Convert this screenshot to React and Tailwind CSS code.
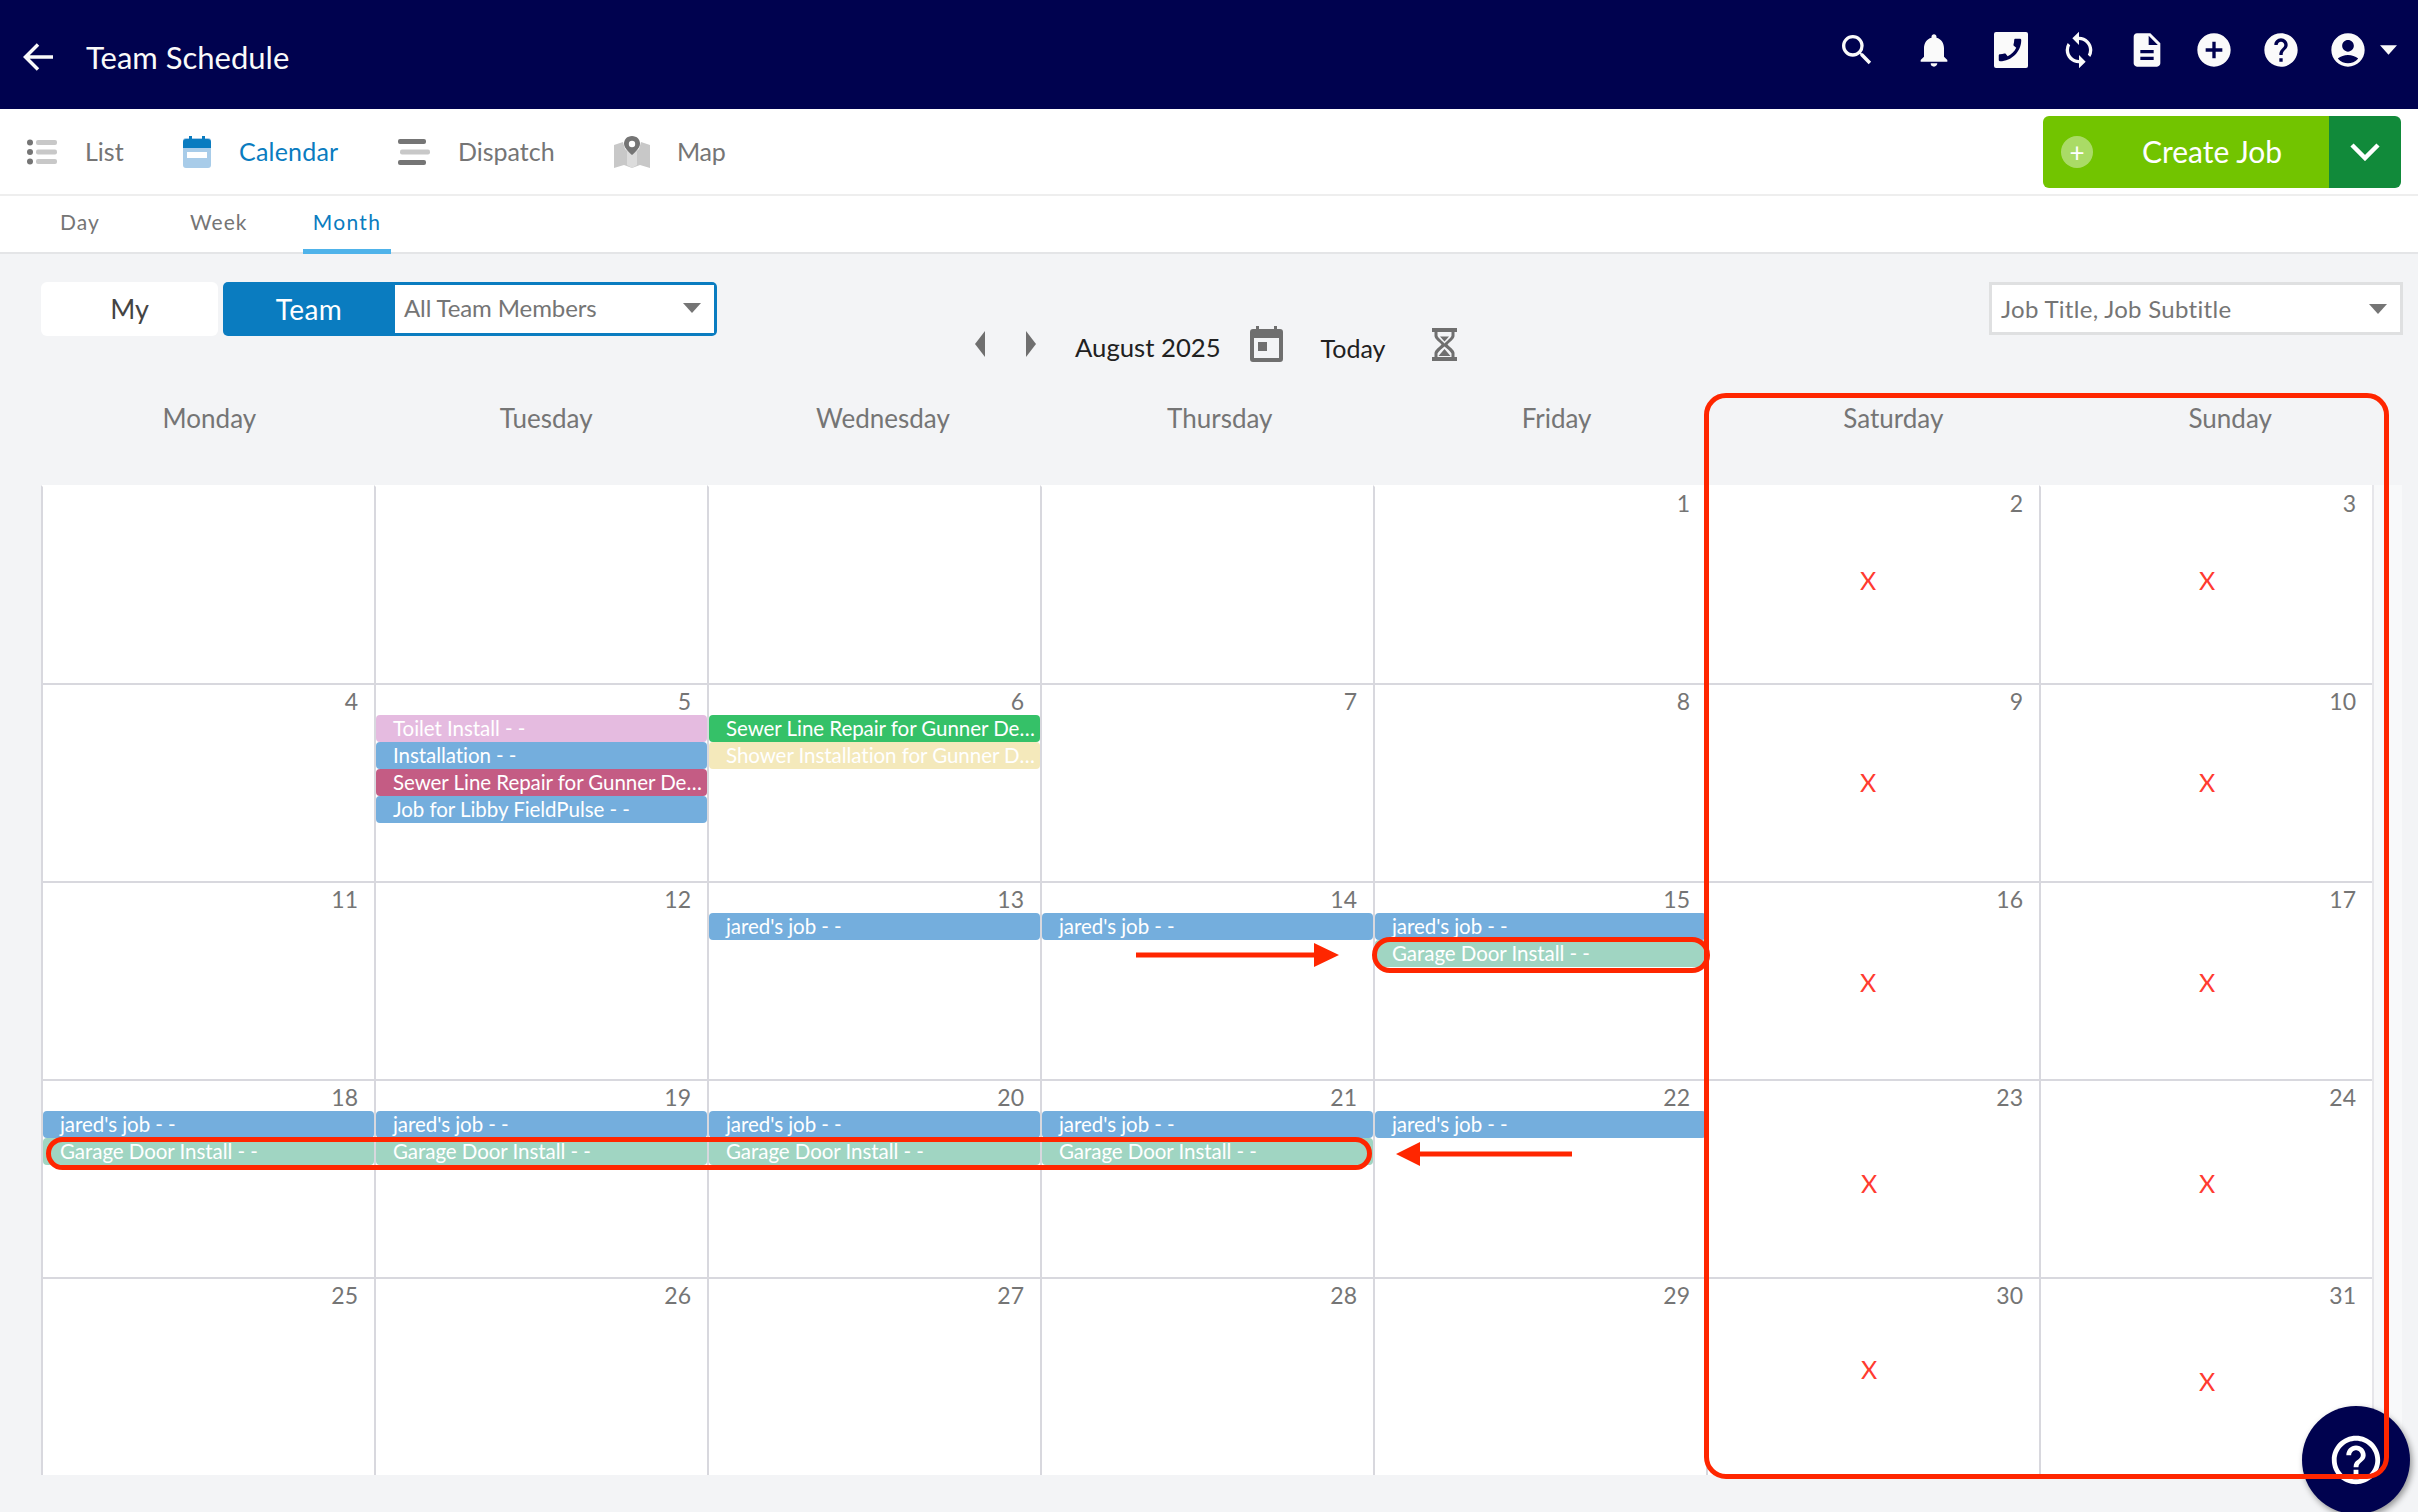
import * as React from 'react';
import { MdAccountCircle, MdAddCircle, MdDescription, MdHelp, MdHelpOutline, MdNotifications, MdSearch, MdSync } from 'react-icons/md';

const weekdays = ['Monday', 'Tuesday', 'Wednesday', 'Thursday', 'Friday', 'Saturday', 'Sunday'];

const blue = 'bg-[#74aedd]';
const teal = 'bg-[#a0d5c2]';

const events = {
  5: [
    { title: 'Toilet Install - -', color: 'bg-[#e5bbe0]' },
    { title: 'Installation - -', color: blue },
    { title: 'Sewer Line Repair for Gunner Dean - -', color: 'bg-[#c45c84]' },
    { title: 'Job for Libby FieldPulse - -', color: blue },
  ],
  6: [
    { title: 'Sewer Line Repair for Gunner Dean - -', color: 'bg-[#35c168]' },
    { title: 'Shower Installation for Gunner Dean - -', color: 'bg-[#f4e9bb]' },
  ],
  13: [{ title: "jared's job - -", color: blue }],
  14: [{ title: "jared's job - -", color: blue }],
  15: [{ title: "jared's job - -", color: blue }, { title: 'Garage Door Install - -', color: teal }],
  18: [{ title: "jared's job - -", color: blue }, { title: 'Garage Door Install - -', color: teal }],
  19: [{ title: "jared's job - -", color: blue }, { title: 'Garage Door Install - -', color: teal }],
  20: [{ title: "jared's job - -", color: blue }, { title: 'Garage Door Install - -', color: teal }],
  21: [{ title: "jared's job - -", color: blue }, { title: 'Garage Door Install - -', color: teal }],
  22: [{ title: "jared's job - -", color: blue }],
};

// august 2025 starts on a friday, four blank cells first
const cells = [null, null, null, null, ...Array.from({ length: 31 }, (_, i) => i + 1)];

const marks = [
  'left-[1860px] top-[565px]',
  'left-[2199px] top-[565px]',
  'left-[1860px] top-[767px]',
  'left-[2199px] top-[767px]',
  'left-[1860px] top-[967px]',
  'left-[2199px] top-[967px]',
  'left-[1861px] top-[1168px]',
  'left-[2199px] top-[1168px]',
  'left-[1861px] top-[1354px]',
  'left-[2199px] top-[1366px]',
];

function Caret({ className }) {
  return (
    <svg viewBox="0 0 18 10" className={className}>
      <path d="M0 0h18L9 10z" fill="currentColor" />
    </svg>
  );
}

function PhoneCard() {
  return (
    <svg viewBox="0 0 34 36" className="h-[36px] w-[34px]">
      <rect width="34" height="36" rx="2" fill="#fafafa" />
      <g transform="translate(31 3) scale(-1.25 1.25)">
        <path
          fill="#00024f"
          d="M20.01 15.38c-1.23 0-2.42-.2-3.53-.56-.35-.12-.74-.03-1.01.24l-1.57 1.97c-2.83-1.35-5.48-3.9-6.89-6.83l1.95-1.66c.27-.28.35-.67.24-1.02-.37-1.11-.56-2.3-.56-3.53 0-.54-.45-.99-.99-.99H4.19C3.65 3 3 3.24 3 3.99 3 13.28 10.73 21 20.01 21c.71 0 .99-.63.99-1.18v-3.45c0-.54-.45-.99-.99-.99z"
        />
      </g>
    </svg>
  );
}

function TopBar() {
  return (
    <header className="flex h-[109px] items-center bg-[#00024f] text-[#fafafa]">
      <svg viewBox="0 0 30 28" className="ml-[23px] mt-[5px] h-[28px] w-[30px]" fill="none" stroke="currentColor" strokeWidth="3.500">
        <path d="M30 14H3M15 1.500L2.500 14 15 26.500" />
      </svg>
      <span className="ml-[33px] mt-[5px] text-[31px] leading-none">Team Schedule</span>
      <div className="mb-[10px] ml-auto mr-[21px] flex items-center">
        <MdSearch className="h-[40px] w-[40px]" />
        <MdNotifications className="ml-[37px] h-[40px] w-[40px]" />
        <div className="ml-[37px] flex w-[40px] justify-center">
          <PhoneCard />
        </div>
        <MdSync className="ml-[28px] h-[42px] w-[40px]" />
        <MdDescription className="ml-[28px] h-[44px] w-[40px]" />
        <MdAddCircle className="ml-[27px] h-[44px] w-[40px]" />
        <MdHelp className="ml-[27px] h-[44px] w-[40px]" />
        <MdAccountCircle className="ml-[27px] h-[44px] w-[40px]" />
        <Caret className="ml-[12px] h-[10px] w-[17px]" />
      </div>
    </header>
  );
}

function ListIcon() {
  return (
    <svg viewBox="0 0 30 26" className="h-[26px] w-[30px]">
      <circle cx="3" cy="3.5" r="3" fill="#757575" />
      <circle cx="3" cy="13" r="3" fill="#757575" />
      <circle cx="3" cy="22.5" r="3" fill="#757575" />
      <rect x="9" y="1" width="21" height="5" rx="2" fill="#c8c8c8" />
      <rect x="9" y="10.5" width="21" height="5" rx="2" fill="#c8c8c8" />
      <rect x="9" y="20" width="21" height="5" rx="2" fill="#c8c8c8" />
    </svg>
  );
}

function CalendarIcon() {
  return (
    <svg viewBox="0 0 28 32" className="h-[32px] w-[28px]">
      <rect y="2" width="28" height="30" rx="3" fill="#a8cce9" />
      <path d="M3 3h3V0h3v3h10V0h3v3h3a3 3 0 0 1 3 3v6H0V6a3 3 0 0 1 3-3z" fill="#0a7cc0" />
      <rect x="4" y="16" width="20" height="6" fill="#fff" />
    </svg>
  );
}

function DispatchIcon() {
  return (
    <svg viewBox="0 0 32 26" className="h-[26px] w-[32px]">
      <rect width="28" height="5" rx="2" fill="#757575" />
      <rect x="2" y="10.5" width="30" height="5" rx="2" fill="#c8c8c8" />
      <rect y="21" width="28" height="5" rx="2" fill="#757575" />
    </svg>
  );
}

function MapIcon() {
  return (
    <svg viewBox="0 0 36 32" className="h-[32px] w-[36px]">
      <path d="M0 9l9-3 2 7 7 6 7-6 2-7 9 3v23l-10-3-8 3-8-3-10 3z" fill="#c8c8c8" />
      <path d="M13 14l5 5 5-5v15l-5 3-5-3z" fill="#dcdcdc" />
      <path d="M18 0c-5 0-8 3.600-8 7.800C10 13 18 19 18 19s8-6 8-11.200C26 3.600 23 0 18 0z" fill="#757575" />
      <circle cx="18" cy="8" r="3.200" fill="#fff" />
    </svg>
  );
}

function NavBar() {
  const itemClass = 'flex items-center text-[25px] leading-none';
  return (
    <nav className="flex h-[87px] items-center border-b-2 border-[#eeeeee] bg-white pr-[17px] text-[#757575]">
      <div className={`${itemClass} ml-[27px] w-[156px]`}>
        <ListIcon />
        <span className="ml-[28px]">List</span>
      </div>
      <div className={`${itemClass} w-[215px] text-[#0a7cc0]`}>
        <CalendarIcon />
        <span className="ml-[28px] tracking-[0.2px]">Calendar</span>
      </div>
      <div className={`${itemClass} w-[216px]`}>
        <DispatchIcon />
        <span className="ml-[28px]">Dispatch</span>
      </div>
      <div className={itemClass}>
        <MapIcon />
        <span className="ml-[27px] tracking-[-0.3px]">Map</span>
      </div>
      <button className="ml-auto flex h-[72px] w-[358px] overflow-hidden rounded-[6px] text-white">
        <span className="flex w-[286px] items-center bg-[#72c400] pl-[18px]">
          <span className="flex h-[32px] w-[32px] items-center justify-center rounded-full bg-white/40 text-[26px] leading-none">+</span>
          <span className="mb-[2px] ml-[49px] text-[30px] leading-none">Create Job</span>
        </span>
        <span className="flex flex-1 items-center justify-center bg-[#118a3a]">
          <svg viewBox="0 0 30 18" className="h-[18px] w-[30px]" fill="none" stroke="white" strokeWidth="4.500">
            <path d="M2 2l13 13L28 2" />
          </svg>
        </span>
      </button>
    </nav>
  );
}

function Tabs() {
  return (
    <div className="flex h-[58px] border-b-2 border-[#e4e5e7] bg-white text-[21px] tracking-[1px] text-[#757575]">
      <span className="ml-[60px] mt-[12px] w-[130px] leading-[28px]">Day</span>
      <span className="mt-[12px] w-[113px] leading-[28px]">Week</span>
      <span className="relative w-[88px] pt-[12px] text-center leading-[28px] tracking-[1.300px] text-[#0a7cc0]">
        Month
        <span className="absolute bottom-[-2px] left-0 h-[5px] w-full bg-[#4fb3ea]" />
      </span>
    </div>
  );
}

function Toolbar() {
  return (
    <div className="flex h-[126px] items-start pl-[41px] pr-[15px]">
      <button className="mt-[28px] flex h-[54px] w-[177px] items-center justify-center rounded-[6px] bg-white text-[27px] text-[#444444]">My</button>
      <div className="ml-[5px] mt-[28px] flex h-[54px] w-[494px] rounded-[5px] bg-[#0a7cc0] p-[3px] pl-0">
        <span className="flex w-[172px] items-center justify-center text-[28px] tracking-[0.4px] text-white">Team</span>
        <div className="flex flex-1 items-center justify-between bg-white pl-[9px] pr-[13px] text-[24px] tracking-[-0.1px] text-[#757575]">
          <span className="mb-[2px]">All Team Members</span>
          <Caret className="mb-[2px] h-[10px] w-[18px]" />
        </div>
      </div>
      <div className="ml-[258px] mt-[72px] flex h-[36px] items-center text-[#212121]">
        <svg viewBox="0 0 10 26" className="h-[26px] w-[10px] text-[#6f6f6f]">
          <path d="M10 0v26L0 13z" fill="currentColor" />
        </svg>
        <svg viewBox="0 0 10 26" className="ml-[41px] h-[26px] w-[10px] text-[#6f6f6f]">
          <path d="M0 0v26l10-13z" fill="currentColor" />
        </svg>
        <span className="ml-[39px] mt-[8px] text-[25.700px] leading-none">August 2025</span>
        <svg viewBox="0 0 33 36" className="ml-[29px] h-[36px] w-[33px]">
          <path
            fill="#6f6f6f"
            fillRule="evenodd"
            d="M6 0h3v3h15V0h3v3h3a3 3 0 0 1 3 3v27a3 3 0 0 1-3 3H3a3 3 0 0 1-3-3V6a3 3 0 0 1 3-3h3zM4 12v20h25V12zm4 4h9v9H8z"
          />
        </svg>
        <span className="ml-[38px] mt-[8px] text-[25px] leading-none">Today</span>
        <svg viewBox="0 0 25 33" className="ml-[47px] h-[33px] w-[25px]">
          <path
            fill="#6f6f6f"
            fillRule="evenodd"
            d="M0 0h25v4h-2.500v4c0 3-5 6-7 8.500 2 2.500 7 5.500 7 8.500v4H25v4H0v-4h2.500v-4c0-3 5-6 7-8.500-2-2.500-7-5.500-7-8.500V4H0zm5.500 4v3.500c0 2 5 5.500 7 8 2-2.500 7-6 7-8V4zm7 14.500c-2 2-6 4.500-7 7V29h14v-3.500c-1-2.500-5-5-7-7z"
          />
          <path fill="#6f6f6f" d="M8 8.500h9l-4.500 5zM12.500 21l6 7h-12z" />
        </svg>
      </div>
      <div className="ml-auto mt-[28px] flex h-[53px] w-[414px] items-center justify-between border-[3px] border-[#dfe0e1] bg-white pl-[9px] pr-[13px] text-[24px] tracking-[0.3px] text-[#757575]">
        <span>Job Title, Job Subtitle</span>
        <Caret className="h-[10px] w-[18px]" />
      </div>
    </div>
  );
}

function DayCell({ day, index }) {
  const list = day ? events[day] || [] : [];
  return (
    <div
      className={`h-[198px] border-l-2 border-l-[#d8d8de] ${index < 7 ? 'border-t-2 border-t-white' : 'border-t-2 border-t-[#d8d8de]'}`}
    >
      <div className="flex h-[30px] items-end justify-end pb-[1px] pr-[16px] text-[23px] leading-[26px] text-[#757575]">{day}</div>
      <div className="flex flex-col">
        {list.map((event, i) => (
          <div
            key={`event-${day}-${i}`}
            className={`h-[27px] truncate rounded-[4px] pl-[17px] pr-[2px] text-[20.500px] leading-[27px] tracking-[-0.05px] text-white ${event.color}`}
          >
            {event.title}
          </div>
        ))}
      </div>
    </div>
  );
}

function Calendar() {
  return (
    <div className="ml-[41px] mr-[16px]">
      <div className="grid h-[105px] w-[2360px] grid-cols-[repeat(7,336.800px)] pt-[24px] text-center text-[26px] text-[#757575]">
        {weekdays.map((name) => (
          <div key={name} className="leading-[28px]">
            {name}
          </div>
        ))}
      </div>
      <div className="flex h-[990px] bg-[#f8f9fa]">
        <div className="grid w-[2331px] grid-cols-[repeat(7,333px)] bg-white">
          {cells.map((day, index) => (
            <DayCell key={`cell-${index}`} day={day} index={index} />
          ))}
        </div>
        <div className="h-full border-l-2 border-[#e6e6ea]" />
      </div>
    </div>
  );
}

function Annotations() {
  return (
    <>
      <div className="absolute left-[1704px] top-[393px] h-[1086px] w-[685px] rounded-[22px] border-[5px] border-[#ff2600]" />
      <div className="absolute left-[1372px] top-[937px] h-[36px] w-[338px] rounded-full border-[5px] border-[#ff2600]" />
      <div className="absolute left-[46px] top-[1137px] h-[33px] w-[1326px] rounded-full border-[5px] border-[#ff2600]" />
      <svg viewBox="0 0 203 24" className="absolute left-[1136px] top-[943px] h-[24px] w-[203px]">
        <path d="M0 9.500h178V0l25 12-25 12v-9.500H0z" fill="#ff2600" />
      </svg>
      <svg viewBox="0 0 176 24" className="absolute left-[1396px] top-[1142px] h-[24px] w-[176px]">
        <path d="M176 9.500H24V0L0 12l24 12v-9.500h152z" fill="#ff2600" />
      </svg>
      {marks.map((pos) => (
        <span key={pos} className={`absolute text-[25px] leading-[30px] text-[#ff3b30] ${pos}`}>
          X
        </span>
      ))}
    </>
  );
}

function HelpButton() {
  return (
    <div className="absolute left-[2302px] top-[1406px] flex h-[108px] w-[108px] items-center justify-center rounded-full bg-[#00024f] shadow-[2px_3px_6px_rgba(0,0,0,0.4)]">
      <MdHelpOutline className="h-[58px] w-[58px] text-white" />
    </div>
  );
}

export default function App() {
  return (
    <div className="relative h-[1512px] w-[2418px] overflow-hidden bg-[#f3f4f6] font-['Lato',sans-serif]">
      <TopBar />
      <NavBar />
      <Tabs />
      <Toolbar />
      <Calendar />
      <HelpButton />
      <Annotations />
    </div>
  );
}
